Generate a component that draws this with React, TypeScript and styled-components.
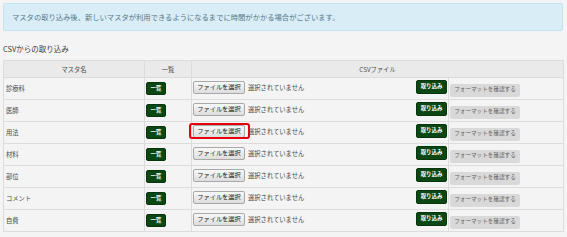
import React from "react";
import styled, { createGlobalStyle, css } from "styled-components";

const Global = createGlobalStyle`
  html, body { margin: 0; padding: 0; background: #f4f4f4; }
  body { font-family: "Noto Sans CJK JP", "Noto Sans", sans-serif; color: #555; }
  * { box-sizing: border-box; }
`;

const Page = styled.div`
  padding: 3px 4px 4px 3px;
  width: 567px;
`;

const Alert = styled.div`
  background: #d9edf7;
  border: 1px solid #c4e4f0;
  border-radius: 2px;
  color: #56788a;
  font-size: 7.3px;
  line-height: 10px;
  padding: 8px 8px;
  height: 28px;
`;

const Title = styled.h3`
  margin: 12px 0 5px;
  font-size: 7.5px;
  line-height: 12px;
  font-weight: normal;
  color: #3a3a3a;
`;

const Table = styled.table`
  width: 560px;
  table-layout: fixed;
  border-collapse: collapse;
  border: 1px solid #dcdcdc;
  font-size: 6.3px;
  color: #4a4a4a;
`;

const Th = styled.th`
  background: #eaeaea;
  border: 1px solid #dcdcdc;
  font-weight: normal;
  height: 17px;
  padding: 0;
  text-align: center;
  vertical-align: middle;
`;

const Tr = styled.tr`
  height: 22px;
`;

const Td = styled.td<{ $lift?: boolean }>`
  border: 1px solid #dcdcdc;
  border-left: none;
  border-right: 1px solid #dcdcdc;
  padding: 0 1px;
  vertical-align: middle;
  background: #f4f4f4;
  ${(p) =>
    p.$lift &&
    css`
      padding-bottom: 3px;
    `}
`;

const NameCell = styled(Td)`
  padding-left: 2px;
`;

const SplitCell = styled.div`
  display: flex;
  align-items: center;
  justify-content: space-between;
`;

const FileGroup = styled.div`
  display: flex;
  align-items: center;
  gap: 3px;
`;

const GreenButton = styled.button<{ $w: number; $h: number }>`
  width: ${(p) => p.$w}px;
  height: ${(p) => p.$h}px;
  padding: 0;
  background: #0c4713;
  border: 1px solid #08360c;
  border-radius: 2px;
  color: #fff;
  font-family: inherit;
  font-size: 5.4px;
  font-weight: bold;
  line-height: 1;
  display: inline-flex;
  align-items: center;
  justify-content: center;
`;

const FileButton = styled.button<{ $marked?: boolean }>`
  position: relative;
  width: 52px;
  height: 13px;
  padding: 0;
  background: linear-gradient(#f8f8f8, #dddddd);
  border: 1px solid #a8a8a8;
  border-radius: 2px;
  color: #222;
  font-family: inherit;
  font-size: 6.2px;
  line-height: 1;
  ${(p) =>
    p.$marked &&
    css`
      &::after {
        content: "";
        position: absolute;
        top: -3px;
        bottom: -2px;
        left: -5px;
        right: -6px;
        border: 2px solid #e4000b;
        border-radius: 3px;
      }
    `}
`;

const NoFile = styled.span`
  font-size: 6.3px;
  color: #444;
  white-space: nowrap;
`;

const FormatButton = styled.button`
  width: 70px;
  height: 13px;
  padding: 0;
  margin-top: 3px;
  background: #d9d9d9;
  border: none;
  border-radius: 2px;
  color: #5e5e5e;
  font-family: inherit;
  font-size: 5.6px;
  line-height: 1;
  display: block;
`;

const rows = ["診療科", "医師", "用法", "材料", "部位", "コメント", "自費"];

export default function App() {
  return (
    <Page>
      <Global />
      <Alert>マスタの取り込み後、新しいマスタが利用できるようになるまでに時間がかかる場合がございます。</Alert>
      <Title>CSVからの取り込み</Title>
      <Table>
        <colgroup>
          <col style={{ width: 141 }} />
          <col style={{ width: 47 }} />
          <col style={{ width: 257 }} />
          <col style={{ width: 115 }} />
        </colgroup>
        <thead>
          <tr>
            <Th>マスタ名</Th>
            <Th>一覧</Th>
            <Th colSpan={2}>CSVファイル</Th>
          </tr>
        </thead>
        <tbody>
          {rows.map((name, i) => (
            <Tr key={name}>
              <NameCell>{name}</NameCell>
              <Td>
                <GreenButton $w={20} $h={13}>一覧</GreenButton>
              </Td>
              <Td $lift>
                <SplitCell>
                  <FileGroup>
                    <FileButton $marked={i === 2}>ファイルを選択</FileButton>
                    <NoFile>選択されていません</NoFile>
                  </FileGroup>
                  <GreenButton $w={31} $h={14}>取り込み</GreenButton>
                </SplitCell>
              </Td>
              <Td>
                <FormatButton>フォーマットを確認する</FormatButton>
              </Td>
            </Tr>
          ))}
        </tbody>
      </Table>
    </Page>
  );
}
